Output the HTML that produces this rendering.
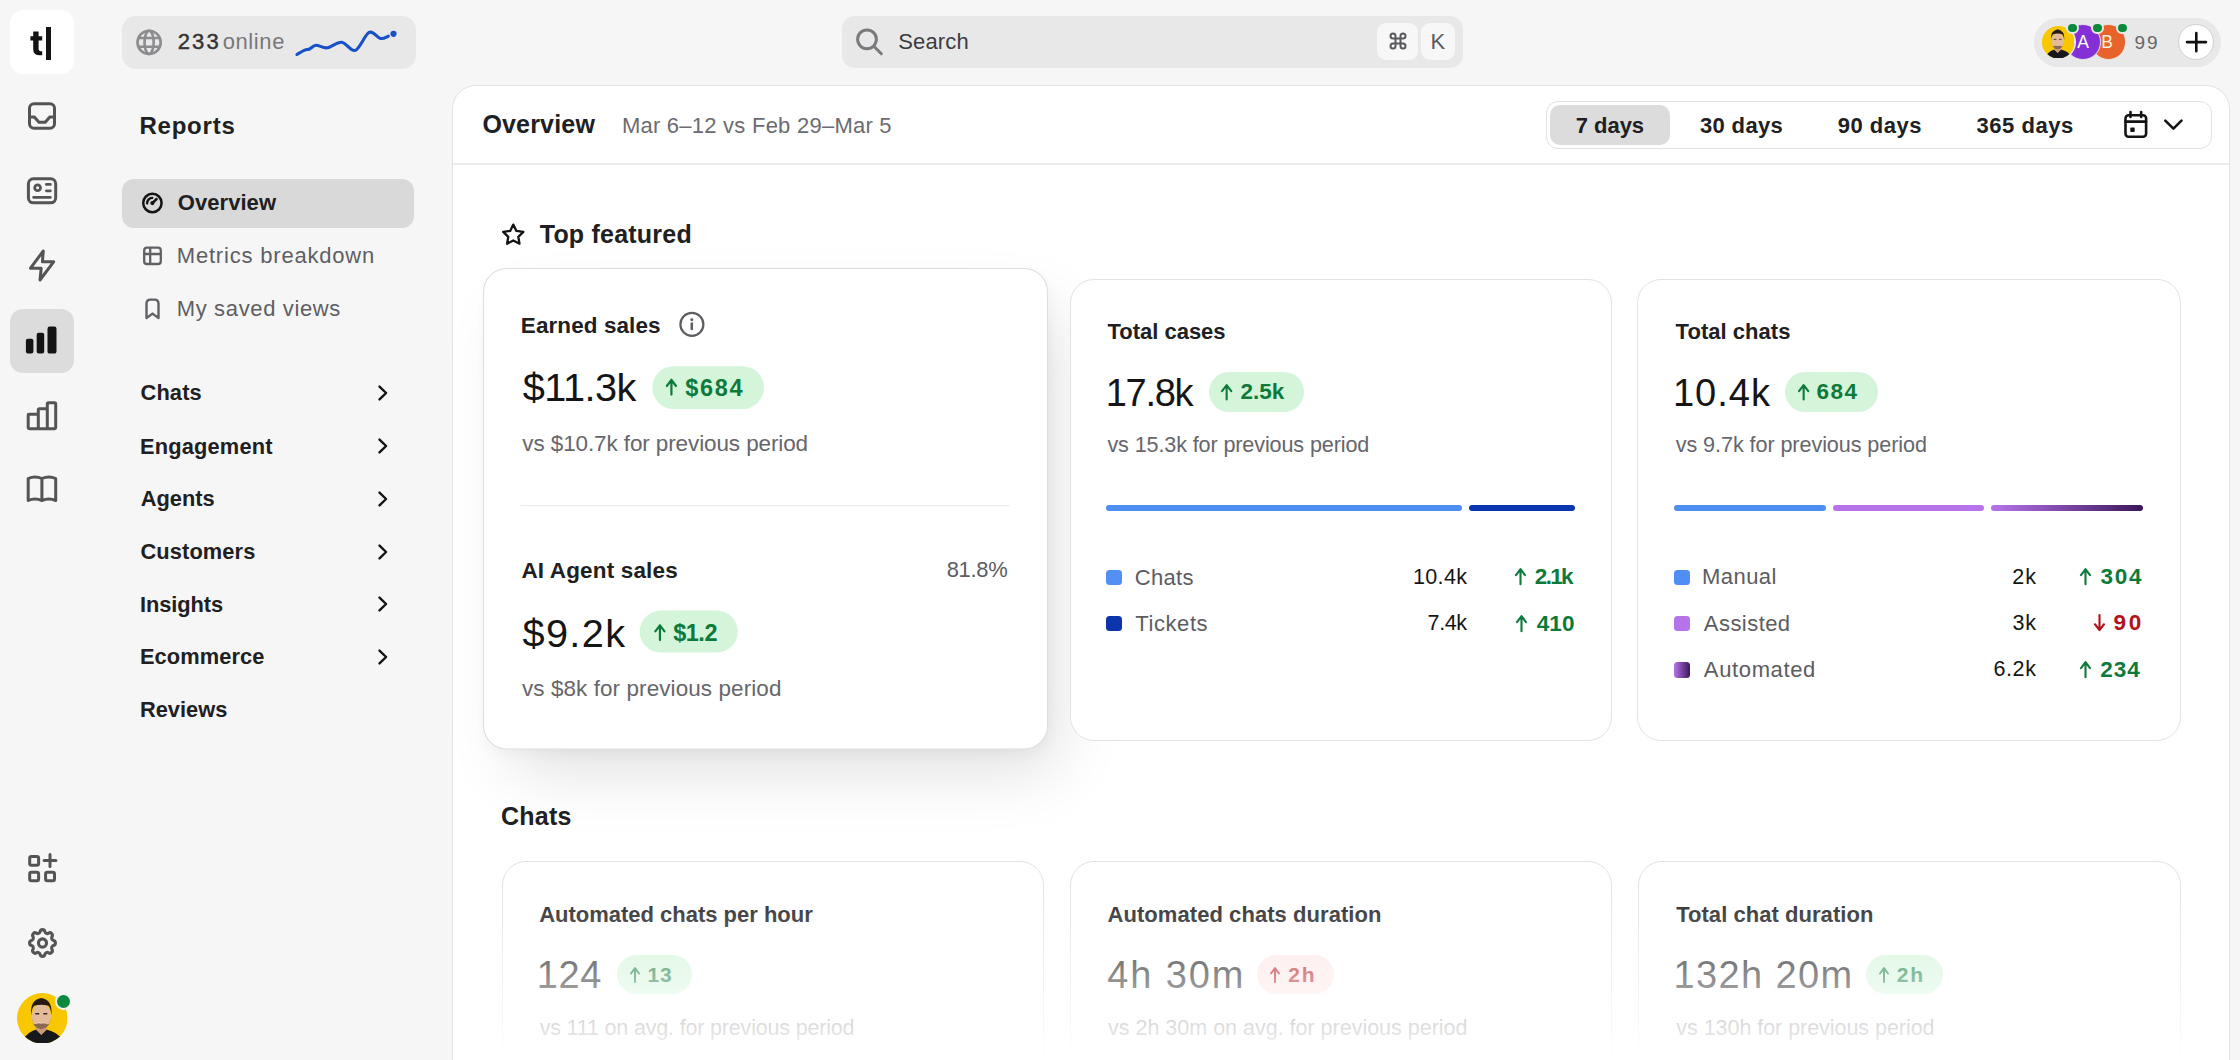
<!DOCTYPE html><html><head><meta charset="utf-8"><style>
html,body{margin:0;padding:0;}
body{width:2240px;height:1060px;overflow:hidden;background:#f6f6f6;position:relative;font-family:"Liberation Sans",sans-serif;}
.t{position:absolute;line-height:1;white-space:nowrap;}
svg{display:block}
</style></head><body>
<div style="position:absolute;left:10.00px;top:10.00px;width:64.00px;height:64.00px;background:#ffffff;border-radius:13px;"></div>
<svg style="position:absolute;left:0;top:0" width="80" height="80">
<path d="M33.2 31.5 H38.6 V36.3 H42.2 V40.4 H38.6 V48.6 Q38.6 51.2 41 51.2 H42.2 V55.2 H39.8 Q33.2 55.2 33.2 49.2 V40.4 H30.4 V36.3 H33.2 Z" fill="#141414"/>
<rect x="46" y="27" width="5" height="33" fill="#141414"/>
</svg>
<svg style="position:absolute;left:0;top:90" width="80" height="50">
<rect x="29.5" y="13.8" width="25" height="24.5" rx="4.5" fill="none" stroke="#545457" stroke-width="3"/>
<path d="M29.5 27 H34.3 L39 32.3 H45.2 L49.8 27 H54.5" fill="none" stroke="#545457" stroke-width="3" stroke-linejoin="round"/>
</svg>
<svg style="position:absolute;left:0;top:170" width="80" height="45">
<rect x="28.4" y="8.8" width="27.3" height="24" rx="5" fill="none" stroke="#545457" stroke-width="3"/>
<circle cx="37.6" cy="17.7" r="2.9" fill="none" stroke="#545457" stroke-width="2.8"/>
<path d="M46.4 14.4 H50.4 M46.4 20.8 H50.4 M33.6 27.3 H50.4" fill="none" stroke="#545457" stroke-width="2.8" stroke-linecap="round"/>
</svg>
<svg style="position:absolute;left:0;top:240" width="80" height="50">
<path d="M43.3 11 L30.5 28.2 H41.2 L40 40 L53.6 21.8 H42.4 Z" fill="none" stroke="#545457" stroke-width="3" stroke-linejoin="round"/>
</svg>
<div style="position:absolute;left:10.00px;top:309.00px;width:64.00px;height:64.00px;background:#dcdcdc;border-radius:13px;"></div>
<svg style="position:absolute;left:0;top:300" width="80" height="80">
<rect x="25.9" y="38.8" width="7.5" height="14.8" rx="2" fill="#141414"/>
<rect x="36.7" y="32.8" width="7.5" height="20.8" rx="2" fill="#141414"/>
<rect x="47.5" y="26.5" width="9" height="27.1" rx="2.2" fill="#141414"/>
</svg>
<svg style="position:absolute;left:0;top:390" width="80" height="50">
<path d="M28.2 25 V37 Q28.2 38.8 30 38.8 H54 Q55.7 38.8 55.7 37 V14 Q55.7 12.8 54.5 12.8 H48.5 Q47.3 12.8 47.3 14 V18.7 H39.5 Q38.3 18.7 38.3 19.9 V24.2 H29 Q28.2 24.2 28.2 25 Z M38.3 24.2 V38.8 M47.3 18.7 V38.8" fill="none" stroke="#545457" stroke-width="3" stroke-linejoin="round"/>
</svg>
<svg style="position:absolute;left:0;top:465" width="80" height="45">
<path d="M28.2 13.5 Q35 10.3 41.9 13.5 Q48.8 10.3 55.7 13.5 V35.5 Q48.8 32.5 41.9 35.5 Q35 32.5 28.2 35.5 Z M41.9 13.5 V35.5" fill="none" stroke="#545457" stroke-width="3" stroke-linejoin="round"/>
</svg>
<svg style="position:absolute;left:0;top:845" width="80" height="45">
<rect x="29.7" y="11.4" width="8.9" height="8.8" rx="1.8" fill="none" stroke="#545457" stroke-width="3"/>
<rect x="29.7" y="27.2" width="8.9" height="8.5" rx="1.8" fill="none" stroke="#545457" stroke-width="3"/>
<rect x="45.6" y="27.2" width="8.9" height="8.5" rx="1.8" fill="none" stroke="#545457" stroke-width="3"/>
<path d="M50 9.6 V21.4 M44.1 15.5 H55.9" fill="none" stroke="#545457" stroke-width="3" stroke-linecap="round"/>
</svg>
<svg style="position:absolute;left:27.5px;top:928.2px" width="29" height="30" viewBox="1.9 1.9 20.2 20.2" preserveAspectRatio="none">
<path d="M10.325 4.317c.426 -1.756 2.924 -1.756 3.35 0a1.724 1.724 0 0 0 2.573 1.066c1.543 -.94 3.31 .826 2.37 2.37a1.724 1.724 0 0 0 1.065 2.572c1.756 .426 1.756 2.924 0 3.35a1.724 1.724 0 0 0 -1.066 2.573c.94 1.543 -.826 3.31 -2.37 2.37a1.724 1.724 0 0 0 -2.572 1.065c-.426 1.756 -2.924 1.756 -3.35 0a1.724 1.724 0 0 0 -2.573 -1.066c-1.543 .94 -3.31 -.826 -2.37 -2.37a1.724 1.724 0 0 0 -1.065 -2.572c-1.756 -.426 -1.756 -2.924 0 -3.35a1.724 1.724 0 0 0 1.066 -2.573c-.94 -1.543 .826 -3.31 2.37 -2.37c1 .608 2.296 .07 2.572 -1.065z" fill="none" stroke="#545457" stroke-width="2.15"/>
<circle cx="12" cy="12" r="2.8" fill="none" stroke="#545457" stroke-width="2.15"/>
</svg>
<svg style="position:absolute;left:17.00px;top:992.70px" width="50.6" height="50.6" viewBox="0 0 100 100">
<defs><clipPath id="fa1"><circle cx="50" cy="50" r="50"/></clipPath></defs>
<g clip-path="url(#fa1)">
<rect width="100" height="100" fill="#f8c700"/>
<path d="M12 92 Q22 76 38 72 L48 82 L58 72 Q78 76 90 92 L90 100 L12 100 Z" fill="#17181c"/>
<path d="M38 64 L38 73 L48 83 L58 73 L58 64 Z" fill="#c99a7c"/>
<ellipse cx="48" cy="46" rx="19" ry="25" fill="#e4bb98"/>
<path d="M29.5 50 Q31 70 48 71.5 Q65 70 66.5 50 Q66 62 60 62 Q48 58 36 62 Q30 62 29.5 50 Z" fill="#6e4c3a" opacity="0.75"/>
<path d="M28 44 Q25 14 48 10 Q71 14 68 44 Q67 30 62 25 Q48 21 34 25 Q29 30 28 44 Z" fill="#261a14"/>
<path d="M40 57 Q48 61.5 56 57 Q48 64 40 57 Z" fill="#fff" opacity="0.9"/>
<path d="M37 41 H43 M53 41 H59" stroke="#3a2a22" stroke-width="2.6" stroke-linecap="round"/>
</g></svg>
<div style="position:absolute;left:55px;top:993px;width:17px;height:17px;border-radius:50%;background:#0a8a3a;border:2.5px solid #f5f5f5;box-sizing:border-box"></div>
<div style="position:absolute;left:121.50px;top:16.00px;width:294.00px;height:52.50px;background:#e8e8e8;border-radius:14px;"></div>
<svg style="position:absolute;left:130px;top:24px" width="40" height="36">
<g fill="none" stroke="#8c8c90" stroke-width="2.6">
<circle cx="19.1" cy="18.4" r="11.6"/>
<ellipse cx="19.1" cy="18.4" rx="4.6" ry="11.6"/>
<path d="M8 14 H30.2 M8 22.8 H30.2"/>
</g></svg>
<div class="t" style="left:177.70px;top:30.97px;font-size:22px;font-weight:400;color:#333336;letter-spacing:2.175px;-webkit-text-stroke:0.45px #333336;">233</div>
<div class="t" style="left:222.66px;top:30.97px;font-size:22px;font-weight:400;color:#78787c;letter-spacing:0.617px;">online</div>
<svg style="position:absolute;left:0;top:0" width="420" height="70">
<path d="M296.9 54.5 C298.2 53.8 302.6 51.1 304.7 50.2 C306.8 49.3 307.7 49.8 309.6 49.0 C311.5 48.2 313.1 45.5 316 45.3 C318.9 45.1 323.0 48.3 327.3 47.8 C331.6 47.3 336.9 41.8 341.6 42.2 C346.3 42.6 350.7 52.0 355.3 50.4 C359.9 48.8 364.9 34.4 369.1 32.4 C373.3 30.4 377.2 37.8 380.4 38.4 C383.6 39.0 387.0 36.6 388.3 36.2" fill="none" stroke="#1850c8" stroke-width="3.1" stroke-linecap="round"/>
<circle cx="393.5" cy="33.8" r="3.1" fill="#1850c8"/>
</svg>
<div style="position:absolute;left:841.70px;top:16.00px;width:621.30px;height:51.70px;background:#e8e8e8;border-radius:13px;"></div>
<svg style="position:absolute;left:850px;top:22px" width="40" height="40">
<circle cx="17" cy="17.3" r="9.4" fill="none" stroke="#7a7a7e" stroke-width="3"/>
<path d="M23.8 24.3 L31.3 31.8" stroke="#7a7a7e" stroke-width="3" stroke-linecap="round"/>
</svg>
<div class="t" style="left:898.21px;top:31.17px;font-size:22px;font-weight:400;color:#3c3c40;letter-spacing:0.156px;">Search</div>
<div style="position:absolute;left:1377.20px;top:22.90px;width:40.70px;height:37.00px;background:#f7f7f8;border-radius:9px;"></div>
<div style="position:absolute;left:1421.00px;top:22.90px;width:34.30px;height:37.00px;background:#f7f7f8;border-radius:9px;"></div>
<svg style="position:absolute;left:1387.5px;top:31px" width="20" height="20" viewBox="0 0 24 24">
<path d="M9 9 V6 A3 3 0 1 0 6 9 H18 A3 3 0 1 0 15 6 V18 A3 3 0 1 0 18 15 H6 A3 3 0 1 0 9 18 Z" fill="none" stroke="#5a5a5e" stroke-width="2.4"/>
</svg>
<div class="t" style="left:1430.38px;top:30.87px;font-size:22px;font-weight:400;color:#5a5a5e;">K</div>
<div style="position:absolute;left:2034.00px;top:17.60px;width:187.00px;height:49.50px;background:#e8e8e8;border-radius:25px;"></div>
<div style="position:absolute;left:2090.7px;top:24.2px;width:35.6px;height:35.6px;border-radius:50%;background:#e8632b;border:1.6px solid #e8e8e8;box-sizing:border-box"></div>
<div class="t" style="left:2101.16px;top:33.88px;font-size:17.5px;font-weight:400;color:#fff0dc;">B</div>
<div style="position:absolute;left:2065.3px;top:24.2px;width:35.6px;height:35.6px;border-radius:50%;background:#8530d6;border:1.6px solid #e8e8e8;box-sizing:border-box"></div>
<div class="t" style="left:2077.26px;top:33.88px;font-size:17.5px;font-weight:400;color:#ffffff;">A</div>
<div style="position:absolute;left:2040.4px;top:24.2px;width:35.6px;height:35.6px;border-radius:50%;background:#e8e8e8;"></div>
<svg style="position:absolute;left:2041.90px;top:25.70px" width="32.6" height="32.6" viewBox="0 0 100 100">
<defs><clipPath id="fa2"><circle cx="50" cy="50" r="50"/></clipPath></defs>
<g clip-path="url(#fa2)">
<rect width="100" height="100" fill="#f8c700"/>
<path d="M12 92 Q22 76 38 72 L48 82 L58 72 Q78 76 90 92 L90 100 L12 100 Z" fill="#17181c"/>
<path d="M38 64 L38 73 L48 83 L58 73 L58 64 Z" fill="#c99a7c"/>
<ellipse cx="48" cy="46" rx="19" ry="25" fill="#e4bb98"/>
<path d="M29.5 50 Q31 70 48 71.5 Q65 70 66.5 50 Q66 62 60 62 Q48 58 36 62 Q30 62 29.5 50 Z" fill="#6e4c3a" opacity="0.75"/>
<path d="M28 44 Q25 14 48 10 Q71 14 68 44 Q67 30 62 25 Q48 21 34 25 Q29 30 28 44 Z" fill="#261a14"/>
<path d="M40 57 Q48 61.5 56 57 Q48 64 40 57 Z" fill="#fff" opacity="0.9"/>
<path d="M37 41 H43 M53 41 H59" stroke="#3a2a22" stroke-width="2.6" stroke-linecap="round"/>
</g></svg>
<div style="position:absolute;left:2066.2px;top:21.9px;width:12.6px;height:12.6px;border-radius:50%;background:#0a8a3a;border:2px solid #e8e8e8;box-sizing:border-box"></div>
<div style="position:absolute;left:2091.1px;top:21.9px;width:12.6px;height:12.6px;border-radius:50%;background:#0a8a3a;border:2px solid #e8e8e8;box-sizing:border-box"></div>
<div style="position:absolute;left:2116.0px;top:21.9px;width:12.6px;height:12.6px;border-radius:50%;background:#0a8a3a;border:2px solid #e8e8e8;box-sizing:border-box"></div>
<div class="t" style="left:2134.50px;top:33.11px;font-size:19px;font-weight:400;color:#66666a;letter-spacing:1.968px;">99</div>
<div style="position:absolute;left:2178.4px;top:24.2px;width:35.8px;height:35.8px;border-radius:50%;background:#fff;border:1.3px solid #cfcfcf;box-sizing:border-box"></div>
<svg style="position:absolute;left:2180px;top:26px" width="34" height="34">
<path d="M16.3 7 V25.2 M7 16.1 H26" stroke="#111" stroke-width="2.6" stroke-linecap="round"/>
</svg>
<div class="t" style="left:139.48px;top:114.08px;font-size:24px;font-weight:700;color:#202022;letter-spacing:0.770px;">Reports</div>
<div style="position:absolute;left:121.70px;top:178.50px;width:292.50px;height:49.00px;background:#d9d9d9;border-radius:12px;"></div>
<svg style="position:absolute;left:136px;top:186px" width="34" height="34">
<circle cx="16.4" cy="17" r="9.2" fill="none" stroke="#141414" stroke-width="2.5"/>
<path d="M16.4 17.1 L20.6 13" stroke="#141414" stroke-width="2.5" stroke-linecap="round"/>
<circle cx="16.4" cy="17.1" r="2.1" fill="#141414"/>
<path d="M11.1 17.4 A5.3 5.3 0 0 1 16.2 11.9" fill="none" stroke="#141414" stroke-width="2.4" stroke-linecap="round"/>
</svg>
<div class="t" style="left:177.72px;top:192.37px;font-size:22px;font-weight:700;color:#202022;letter-spacing:0.069px;">Overview</div>
<svg style="position:absolute;left:136px;top:240px" width="34" height="34">
<rect x="8.2" y="7.7" width="16.6" height="16.3" rx="2.8" fill="none" stroke="#606066" stroke-width="2.3"/>
<path d="M8.2 14 H24.8 M14.2 7.7 V24" fill="none" stroke="#606066" stroke-width="2.3"/>
</svg>
<div class="t" style="left:176.78px;top:245.27px;font-size:22px;font-weight:400;color:#5e5e64;letter-spacing:0.807px;">Metrics breakdown</div>
<svg style="position:absolute;left:136px;top:292px" width="34" height="34">
<path d="M10.5 26 V11.6 Q10.5 7.6 14.5 7.6 H18.5 Q22.5 7.6 22.5 11.6 V26 L16.5 21.6 Z" fill="none" stroke="#606066" stroke-width="2.4" stroke-linejoin="round"/>
</svg>
<div class="t" style="left:176.78px;top:298.37px;font-size:22px;font-weight:400;color:#5e5e64;letter-spacing:0.640px;">My saved views</div>
<div class="t" style="left:140.53px;top:382.24px;font-size:21.8px;font-weight:700;color:#202022;letter-spacing:0.149px;">Chats</div>
<svg style="position:absolute;left:372px;top:381.0px" width="24" height="24"><path d="M7.5 5.6 L14.1 12 L7.5 18.4" fill="none" stroke="#141414" stroke-width="2.4" stroke-linecap="round" stroke-linejoin="round"/></svg>
<div class="t" style="left:139.93px;top:435.54px;font-size:21.8px;font-weight:700;color:#202022;letter-spacing:0.194px;">Engagement</div>
<svg style="position:absolute;left:372px;top:434.3px" width="24" height="24"><path d="M7.5 5.6 L14.1 12 L7.5 18.4" fill="none" stroke="#141414" stroke-width="2.4" stroke-linecap="round" stroke-linejoin="round"/></svg>
<div class="t" style="left:140.86px;top:488.24px;font-size:21.8px;font-weight:700;color:#202022;letter-spacing:-0.026px;">Agents</div>
<svg style="position:absolute;left:372px;top:487.0px" width="24" height="24"><path d="M7.5 5.6 L14.1 12 L7.5 18.4" fill="none" stroke="#141414" stroke-width="2.4" stroke-linecap="round" stroke-linejoin="round"/></svg>
<div class="t" style="left:140.53px;top:540.84px;font-size:21.8px;font-weight:700;color:#202022;letter-spacing:0.112px;">Customers</div>
<svg style="position:absolute;left:372px;top:539.6px" width="24" height="24"><path d="M7.5 5.6 L14.1 12 L7.5 18.4" fill="none" stroke="#141414" stroke-width="2.4" stroke-linecap="round" stroke-linejoin="round"/></svg>
<div class="t" style="left:139.93px;top:593.54px;font-size:21.8px;font-weight:700;color:#202022;letter-spacing:-0.058px;">Insights</div>
<svg style="position:absolute;left:372px;top:592.3px" width="24" height="24"><path d="M7.5 5.6 L14.1 12 L7.5 18.4" fill="none" stroke="#141414" stroke-width="2.4" stroke-linecap="round" stroke-linejoin="round"/></svg>
<div class="t" style="left:139.93px;top:646.14px;font-size:21.8px;font-weight:700;color:#202022;letter-spacing:0.109px;">Ecommerce</div>
<svg style="position:absolute;left:372px;top:644.9px" width="24" height="24"><path d="M7.5 5.6 L14.1 12 L7.5 18.4" fill="none" stroke="#141414" stroke-width="2.4" stroke-linecap="round" stroke-linejoin="round"/></svg>
<div class="t" style="left:139.93px;top:698.84px;font-size:21.8px;font-weight:700;color:#202022;letter-spacing:0.015px;">Reviews</div>
<div style="position:absolute;left:451.5px;top:84.5px;width:1778px;height:1100px;background:#fff;border:1.5px solid #e2e2e2;border-radius:24px;box-sizing:border-box;overflow:hidden" id="panel">
<div style="position:absolute;left:0;top:77.5px;width:100%;height:1.5px;background:#ececec"></div>
</div>
<div class="t" style="left:482.40px;top:112.23px;font-size:25px;font-weight:700;color:#202022;letter-spacing:0.179px;">Overview</div>
<div class="t" style="left:621.88px;top:115.47px;font-size:22px;font-weight:400;color:#6b6b70;letter-spacing:0.243px;">Mar 6–12 vs Feb 29–Mar 5</div>
<div style="position:absolute;left:1546px;top:100.6px;width:666px;height:48.3px;border:1.5px solid #e2e2e2;border-radius:12px;box-sizing:border-box"></div>
<div style="position:absolute;left:1550.00px;top:104.60px;width:120.00px;height:40.00px;background:#dcdcdc;border-radius:10px;"></div>
<div class="t" style="left:1575.77px;top:114.97px;font-size:22px;font-weight:700;color:#202022;letter-spacing:-0.032px;">7 days</div>
<div class="t" style="left:1699.91px;top:114.97px;font-size:22px;font-weight:700;color:#202022;letter-spacing:0.365px;">30 days</div>
<div class="t" style="left:1837.83px;top:114.97px;font-size:22px;font-weight:700;color:#202022;letter-spacing:0.478px;">90 days</div>
<div class="t" style="left:1976.41px;top:114.97px;font-size:22px;font-weight:700;color:#202022;letter-spacing:0.561px;">365 days</div>
<svg style="position:absolute;left:2115px;top:105px" width="80" height="40">
<rect x="10.5" y="10.3" width="20.6" height="21.4" rx="3" fill="none" stroke="#141414" stroke-width="2.6"/>
<path d="M10.5 16.6 H31.1 M15.5 7 V12 M26.2 7 V12" fill="none" stroke="#141414" stroke-width="2.6" stroke-linecap="round"/>
<rect x="15.3" y="22.6" width="4.4" height="4.4" rx="0.8" fill="#141414"/>
<path d="M50.3 15.6 L58.4 23.6 L66.5 15.6" fill="none" stroke="#141414" stroke-width="2.6" stroke-linecap="round" stroke-linejoin="round"/>
</svg>
<svg style="position:absolute;left:495px;top:216px" width="40" height="40">
<path d="M18.3 8.6 L21.4 14.9 L28.4 15.9 L23.3 20.8 L24.5 27.7 L18.3 24.4 L12.1 27.7 L13.3 20.8 L8.2 15.9 L15.2 14.9 Z" fill="none" stroke="#141414" stroke-width="2.3" stroke-linejoin="round"/>
</svg>
<div class="t" style="left:539.75px;top:221.53px;font-size:25px;font-weight:700;color:#202022;letter-spacing:0.216px;">Top featured</div>
<div style="position:absolute;left:482.5px;top:268px;width:541px;height:462px;transform-origin:0 0;transform:scale(1.0445);"><div style="position:absolute;left:0;top:0;width:541px;height:461px;background:#fff;border:1.4px solid #dedede;border-radius:23px;box-sizing:border-box;box-shadow:18px 30px 64px -12px rgba(0,0,0,0.13),2px 6px 12px rgba(0,0,0,0.03)"></div><div class="t" style="left:36.25px;top:45.10px;font-size:21.5px;font-weight:700;color:#202022;letter-spacing:0.096px;">Earned sales</div><svg style="position:absolute;left:187px;top:41px" width="26" height="26">
<circle cx="13" cy="13" r="11" fill="none" stroke="#5c5c63" stroke-width="2.1"/>
<path d="M12.9 12.2 V17.3" stroke="#5c5c63" stroke-width="2.4" stroke-linecap="round"/>
<circle cx="12.9" cy="8.6" r="1.4" fill="#5c5c63"/>
</svg><div class="t" style="left:38.12px;top:94.63px;font-size:38px;font-weight:400;color:#151515;letter-spacing:-0.533px;">$11.3k</div><div style="position:absolute;left:161.90px;top:94.00px;width:107.00px;height:40.50px;background:#d4f5da;border-radius:22px;"></div><svg style="position:absolute;left:175.00px;top:106.20px;overflow:visible" width="10.8" height="15.2"><path d="M5.4 15.2 V1.2 M1 6.940000000000001 L5.4 1.2 L9.8 6.940000000000001" fill="none" stroke="#0d7a3c" stroke-width="2.1" stroke-linecap="round" stroke-linejoin="round"/></svg><div class="t" style="left:193.72px;top:104.75px;font-size:22.5px;font-weight:700;color:#0d7a3c;letter-spacing:1.596px;">$684</div><div class="t" style="left:37.65px;top:158.30px;font-size:21.5px;font-weight:400;color:#66666c;letter-spacing:-0.088px;">vs $10.7k for previous period</div><div style="position:absolute;left:36.10px;top:226.90px;width:467.70px;height:1.50px;background:#e8e8e8;border-radius:0px;"></div><div class="t" style="left:36.76px;top:279.50px;font-size:21.5px;font-weight:700;color:#202022;letter-spacing:0.175px;">AI Agent sales</div><div class="t" style="left:443.91px;top:277.82px;font-size:21px;font-weight:400;color:#5c5c62;letter-spacing:-0.265px;">81.8%</div><div class="t" style="left:37.82px;top:331.33px;font-size:38px;font-weight:400;color:#151515;letter-spacing:1.294px;">$9.2k</div><div style="position:absolute;left:150.00px;top:328.40px;width:93.90px;height:40.10px;background:#d4f5da;border-radius:22px;"></div><svg style="position:absolute;left:163.80px;top:341.00px;overflow:visible" width="10.8" height="15.2"><path d="M5.4 15.2 V1.2 M1 6.940000000000001 L5.4 1.2 L9.8 6.940000000000001" fill="none" stroke="#0d7a3c" stroke-width="2.1" stroke-linecap="round" stroke-linejoin="round"/></svg><div class="t" style="left:182.12px;top:339.15px;font-size:22.5px;font-weight:700;color:#0d7a3c;letter-spacing:-0.479px;">$1.2</div><div class="t" style="left:37.25px;top:392.80px;font-size:21.5px;font-weight:400;color:#66666c;letter-spacing:0.089px;">vs $8k for previous period</div></div>
<div style="position:absolute;left:1069.5px;top:278.5px;width:542.5px;height:462px;background:#fff;border:1.5px solid #e3e3e3;border-radius:24px;box-sizing:border-box;"></div>
<div class="t" style="left:1107.48px;top:321.07px;font-size:22px;font-weight:700;color:#202022;letter-spacing:-0.009px;">Total cases</div>
<div class="t" style="left:1105.75px;top:373.53px;font-size:38px;font-weight:400;color:#151515;letter-spacing:-1.289px;">17.8k</div>
<div style="position:absolute;left:1209.00px;top:372.30px;width:94.80px;height:39.80px;background:#d4f5da;border-radius:22px;"></div><svg style="position:absolute;left:1221.30px;top:383.70px;overflow:visible" width="11.3" height="15.5"><path d="M5.65 15.5 V1.2 M1 7.215000000000001 L5.65 1.2 L10.3 7.215000000000001" fill="none" stroke="#0d7a3c" stroke-width="2.1" stroke-linecap="round" stroke-linejoin="round"/></svg><div class="t" style="left:1240.51px;top:380.95px;font-size:22.5px;font-weight:700;color:#0d7a3c;letter-spacing:-0.010px;">2.5k</div>
<div class="t" style="left:1107.45px;top:433.61px;font-size:21.6px;font-weight:400;color:#66666c;letter-spacing:-0.126px;">vs 15.3k for previous period</div>
<div style="position:absolute;left:1106.30px;top:504.90px;width:355.60px;height:6.00px;background:#4f8ef2;border-radius:3px;"></div>
<div style="position:absolute;left:1468.50px;top:504.90px;width:106.20px;height:6.00px;background:#0a35ad;border-radius:3px;"></div>
<div style="position:absolute;left:1106.30px;top:570.00px;width:15.50px;height:15.00px;background:#5290f6;border-radius:3.5px;"></div>
<div class="t" style="left:1134.70px;top:566.67px;font-size:22px;font-weight:400;color:#5c5c62;letter-spacing:0.349px;">Chats</div>
<div class="t" style="left:1412.89px;top:567.10px;font-size:21.5px;font-weight:400;color:#151515;letter-spacing:0.373px;">10.4k</div>
<div class="t" style="left:1534.81px;top:566.25px;font-size:22.5px;font-weight:700;color:#0d7a3c;letter-spacing:-1.677px;">2.1k</div>
<svg style="position:absolute;left:1514.80px;top:568.40px;overflow:visible" width="11" height="16.3"><path d="M5.5 16.3 V1.2 M1 7.050000000000001 L5.5 1.2 L10 7.050000000000001" fill="none" stroke="#0d7a3c" stroke-width="2.1" stroke-linecap="round" stroke-linejoin="round"/></svg>
<div style="position:absolute;left:1106.30px;top:616.30px;width:15.50px;height:15.00px;background:#0a35ad;border-radius:3.5px;"></div>
<div class="t" style="left:1135.31px;top:612.97px;font-size:22px;font-weight:400;color:#5c5c62;letter-spacing:0.568px;">Tickets</div>
<div class="t" style="left:1427.62px;top:613.40px;font-size:21.5px;font-weight:400;color:#151515;letter-spacing:-0.420px;">7.4k</div>
<div class="t" style="left:1536.76px;top:612.55px;font-size:22.5px;font-weight:700;color:#0d7a3c;letter-spacing:0.109px;">410</div>
<svg style="position:absolute;left:1516.30px;top:614.70px;overflow:visible" width="11" height="16.3"><path d="M5.5 16.3 V1.2 M1 7.050000000000001 L5.5 1.2 L10 7.050000000000001" fill="none" stroke="#0d7a3c" stroke-width="2.1" stroke-linecap="round" stroke-linejoin="round"/></svg>
<div style="position:absolute;left:1637.0px;top:278.5px;width:543.5px;height:462px;background:#fff;border:1.5px solid #e3e3e3;border-radius:24px;box-sizing:border-box;"></div>
<div class="t" style="left:1675.58px;top:321.07px;font-size:22px;font-weight:700;color:#202022;letter-spacing:0.035px;">Total chats</div>
<div class="t" style="left:1672.95px;top:373.53px;font-size:38px;font-weight:400;color:#151515;letter-spacing:1.036px;">10.4k</div>
<div style="position:absolute;left:1784.70px;top:372.30px;width:93.40px;height:39.80px;background:#d4f5da;border-radius:22px;"></div><svg style="position:absolute;left:1797.90px;top:383.70px;overflow:visible" width="11.3" height="15.5"><path d="M5.65 15.5 V1.2 M1 7.215000000000001 L5.65 1.2 L10.3 7.215000000000001" fill="none" stroke="#0d7a3c" stroke-width="2.1" stroke-linecap="round" stroke-linejoin="round"/></svg><div class="t" style="left:1816.46px;top:380.95px;font-size:22.5px;font-weight:700;color:#0d7a3c;letter-spacing:1.519px;">684</div>
<div class="t" style="left:1675.75px;top:433.61px;font-size:21.6px;font-weight:400;color:#66666c;letter-spacing:-0.077px;">vs 9.7k for previous period</div>
<div style="position:absolute;left:1674.20px;top:504.70px;width:151.80px;height:6.00px;background:#4f8ef2;border-radius:3px;"></div>
<div style="position:absolute;left:1833.20px;top:504.70px;width:151.00px;height:6.00px;background:#b774ea;border-radius:3px;"></div>
<div style="position:absolute;left:1991.10px;top:504.70px;width:151.90px;height:6.00px;background:linear-gradient(90deg,#b774ea,#3b175a);border-radius:3px;"></div>
<div style="position:absolute;left:1674.20px;top:569.80px;width:15.60px;height:15.30px;background:#4f8ef2;border-radius:3.5px;"></div>
<div class="t" style="left:1702.09px;top:566.47px;font-size:22px;font-weight:400;color:#5c5c62;letter-spacing:0.428px;">Manual</div>
<div class="t" style="left:2012.23px;top:566.90px;font-size:21.5px;font-weight:400;color:#151515;letter-spacing:0.993px;">2k</div>
<div class="t" style="left:2100.49px;top:566.05px;font-size:22.5px;font-weight:700;color:#0d7a3c;letter-spacing:1.800px;">304</div>
<svg style="position:absolute;left:2080.20px;top:568.20px;overflow:visible" width="11" height="16.3"><path d="M5.5 16.3 V1.2 M1 7.050000000000001 L5.5 1.2 L10 7.050000000000001" fill="none" stroke="#0d7a3c" stroke-width="2.1" stroke-linecap="round" stroke-linejoin="round"/></svg>
<div style="position:absolute;left:1674.20px;top:616.10px;width:15.60px;height:15.30px;background:#b774ea;border-radius:3.5px;"></div>
<div class="t" style="left:1703.85px;top:612.77px;font-size:22px;font-weight:400;color:#5c5c62;letter-spacing:0.446px;">Assisted</div>
<div class="t" style="left:2012.49px;top:613.20px;font-size:21.5px;font-weight:400;color:#151515;letter-spacing:0.724px;">3k</div>
<div class="t" style="left:2113.51px;top:612.35px;font-size:22.5px;font-weight:700;color:#b3121b;letter-spacing:2.712px;">90</div>
<svg style="position:absolute;left:2093.50px;top:614.50px;overflow:visible" width="11" height="16.3"><path d="M5.5 0 V15.100000000000001 M1 9.25 L5.5 15.100000000000001 L10 9.25" fill="none" stroke="#b3121b" stroke-width="2.1" stroke-linecap="round" stroke-linejoin="round"/></svg>
<div style="position:absolute;left:1674.20px;top:662.30px;width:15.60px;height:15.30px;background:linear-gradient(90deg,#b774ea,#3b175a);border-radius:3.5px;"></div>
<div class="t" style="left:1703.85px;top:658.97px;font-size:22px;font-weight:400;color:#5c5c62;letter-spacing:0.633px;">Automated</div>
<div class="t" style="left:1993.42px;top:659.40px;font-size:21.5px;font-weight:400;color:#151515;letter-spacing:0.613px;">6.2k</div>
<div class="t" style="left:2100.31px;top:658.55px;font-size:22.5px;font-weight:700;color:#0d7a3c;letter-spacing:0.991px;">234</div>
<svg style="position:absolute;left:2080.30px;top:660.70px;overflow:visible" width="11" height="16.3"><path d="M5.5 16.3 V1.2 M1 7.050000000000001 L5.5 1.2 L10 7.050000000000001" fill="none" stroke="#0d7a3c" stroke-width="2.1" stroke-linecap="round" stroke-linejoin="round"/></svg>
<div class="t" style="left:501.00px;top:804.03px;font-size:25px;font-weight:700;color:#202022;letter-spacing:0.266px;">Chats</div>
<div style="position:absolute;left:501.5px;top:860.9px;width:542px;height:400px;background:#fff;border:1.5px solid #e3e3e3;border-radius:24px;box-sizing:border-box;"></div>
<div class="t" style="left:539.15px;top:904.07px;font-size:22px;font-weight:700;color:#202022;letter-spacing:-0.007px;">Automated chats per hour</div>
<div class="t" style="left:536.85px;top:956.03px;font-size:38px;font-weight:400;color:#151515;letter-spacing:0.565px;">124</div>
<div style="position:absolute;left:616.80px;top:955.00px;width:74.90px;height:38.90px;background:#d4f5da;border-radius:20px;"></div>
<svg style="position:absolute;left:629.80px;top:967.40px;overflow:visible" width="10" height="15"><path d="M5.0 15 V1.2 M1 6.5 L5.0 1.2 L9 6.5" fill="none" stroke="#0d7a3c" stroke-width="2" stroke-linecap="round" stroke-linejoin="round"/></svg>
<div class="t" style="left:647.49px;top:964.42px;font-size:21px;font-weight:700;color:#0d7a3c;letter-spacing:0.738px;">13</div>
<div class="t" style="left:539.65px;top:1017.80px;font-size:21.5px;font-weight:400;color:#66666c;letter-spacing:-0.175px;">vs 111 on avg. for previous period</div>
<div style="position:absolute;left:1069.9px;top:860.9px;width:542px;height:400px;background:#fff;border:1.5px solid #e3e3e3;border-radius:24px;box-sizing:border-box;"></div>
<div class="t" style="left:1107.55px;top:904.07px;font-size:22px;font-weight:700;color:#202022;letter-spacing:0.056px;">Automated chats duration</div>
<div class="t" style="left:1107.25px;top:956.03px;font-size:38px;font-weight:400;color:#151515;letter-spacing:1.879px;">4h 30m</div>
<div style="position:absolute;left:1257.10px;top:955.00px;width:77.30px;height:38.90px;background:#fde6e6;border-radius:20px;"></div>
<svg style="position:absolute;left:1270.10px;top:967.40px;overflow:visible" width="10" height="15"><path d="M5.0 15 V1.2 M1 6.5 L5.0 1.2 L9 6.5" fill="none" stroke="#b3121b" stroke-width="2" stroke-linecap="round" stroke-linejoin="round"/></svg>
<div class="t" style="left:1288.37px;top:964.42px;font-size:21px;font-weight:700;color:#b3121b;letter-spacing:1.730px;">2h</div>
<div class="t" style="left:1108.05px;top:1017.80px;font-size:21.5px;font-weight:400;color:#66666c;letter-spacing:-0.008px;">vs 2h 30m on avg. for previous period</div>
<div style="position:absolute;left:1638.2px;top:860.9px;width:543px;height:400px;background:#fff;border:1.5px solid #e3e3e3;border-radius:24px;box-sizing:border-box;"></div>
<div class="t" style="left:1676.18px;top:904.07px;font-size:22px;font-weight:700;color:#202022;letter-spacing:0.044px;">Total chat duration</div>
<div class="t" style="left:1673.55px;top:956.03px;font-size:38px;font-weight:400;color:#151515;letter-spacing:1.359px;">132h 20m</div>
<div style="position:absolute;left:1865.60px;top:955.00px;width:77.00px;height:38.90px;background:#d4f5da;border-radius:20px;"></div>
<svg style="position:absolute;left:1878.60px;top:967.40px;overflow:visible" width="10" height="15"><path d="M5.0 15 V1.2 M1 6.5 L5.0 1.2 L9 6.5" fill="none" stroke="#0d7a3c" stroke-width="2" stroke-linecap="round" stroke-linejoin="round"/></svg>
<div class="t" style="left:1896.87px;top:964.42px;font-size:21px;font-weight:700;color:#0d7a3c;letter-spacing:1.730px;">2h</div>
<div class="t" style="left:1676.35px;top:1017.80px;font-size:21.5px;font-weight:400;color:#66666c;letter-spacing:-0.044px;">vs 130h for previous period</div>
<div style="position:absolute;left:453px;top:880px;width:1775px;height:180px;background:linear-gradient(180deg,rgba(255,255,255,0) 0%,rgba(255,255,255,0.1) 12%,rgba(255,255,255,0.96) 100%)"></div>
</body></html>
